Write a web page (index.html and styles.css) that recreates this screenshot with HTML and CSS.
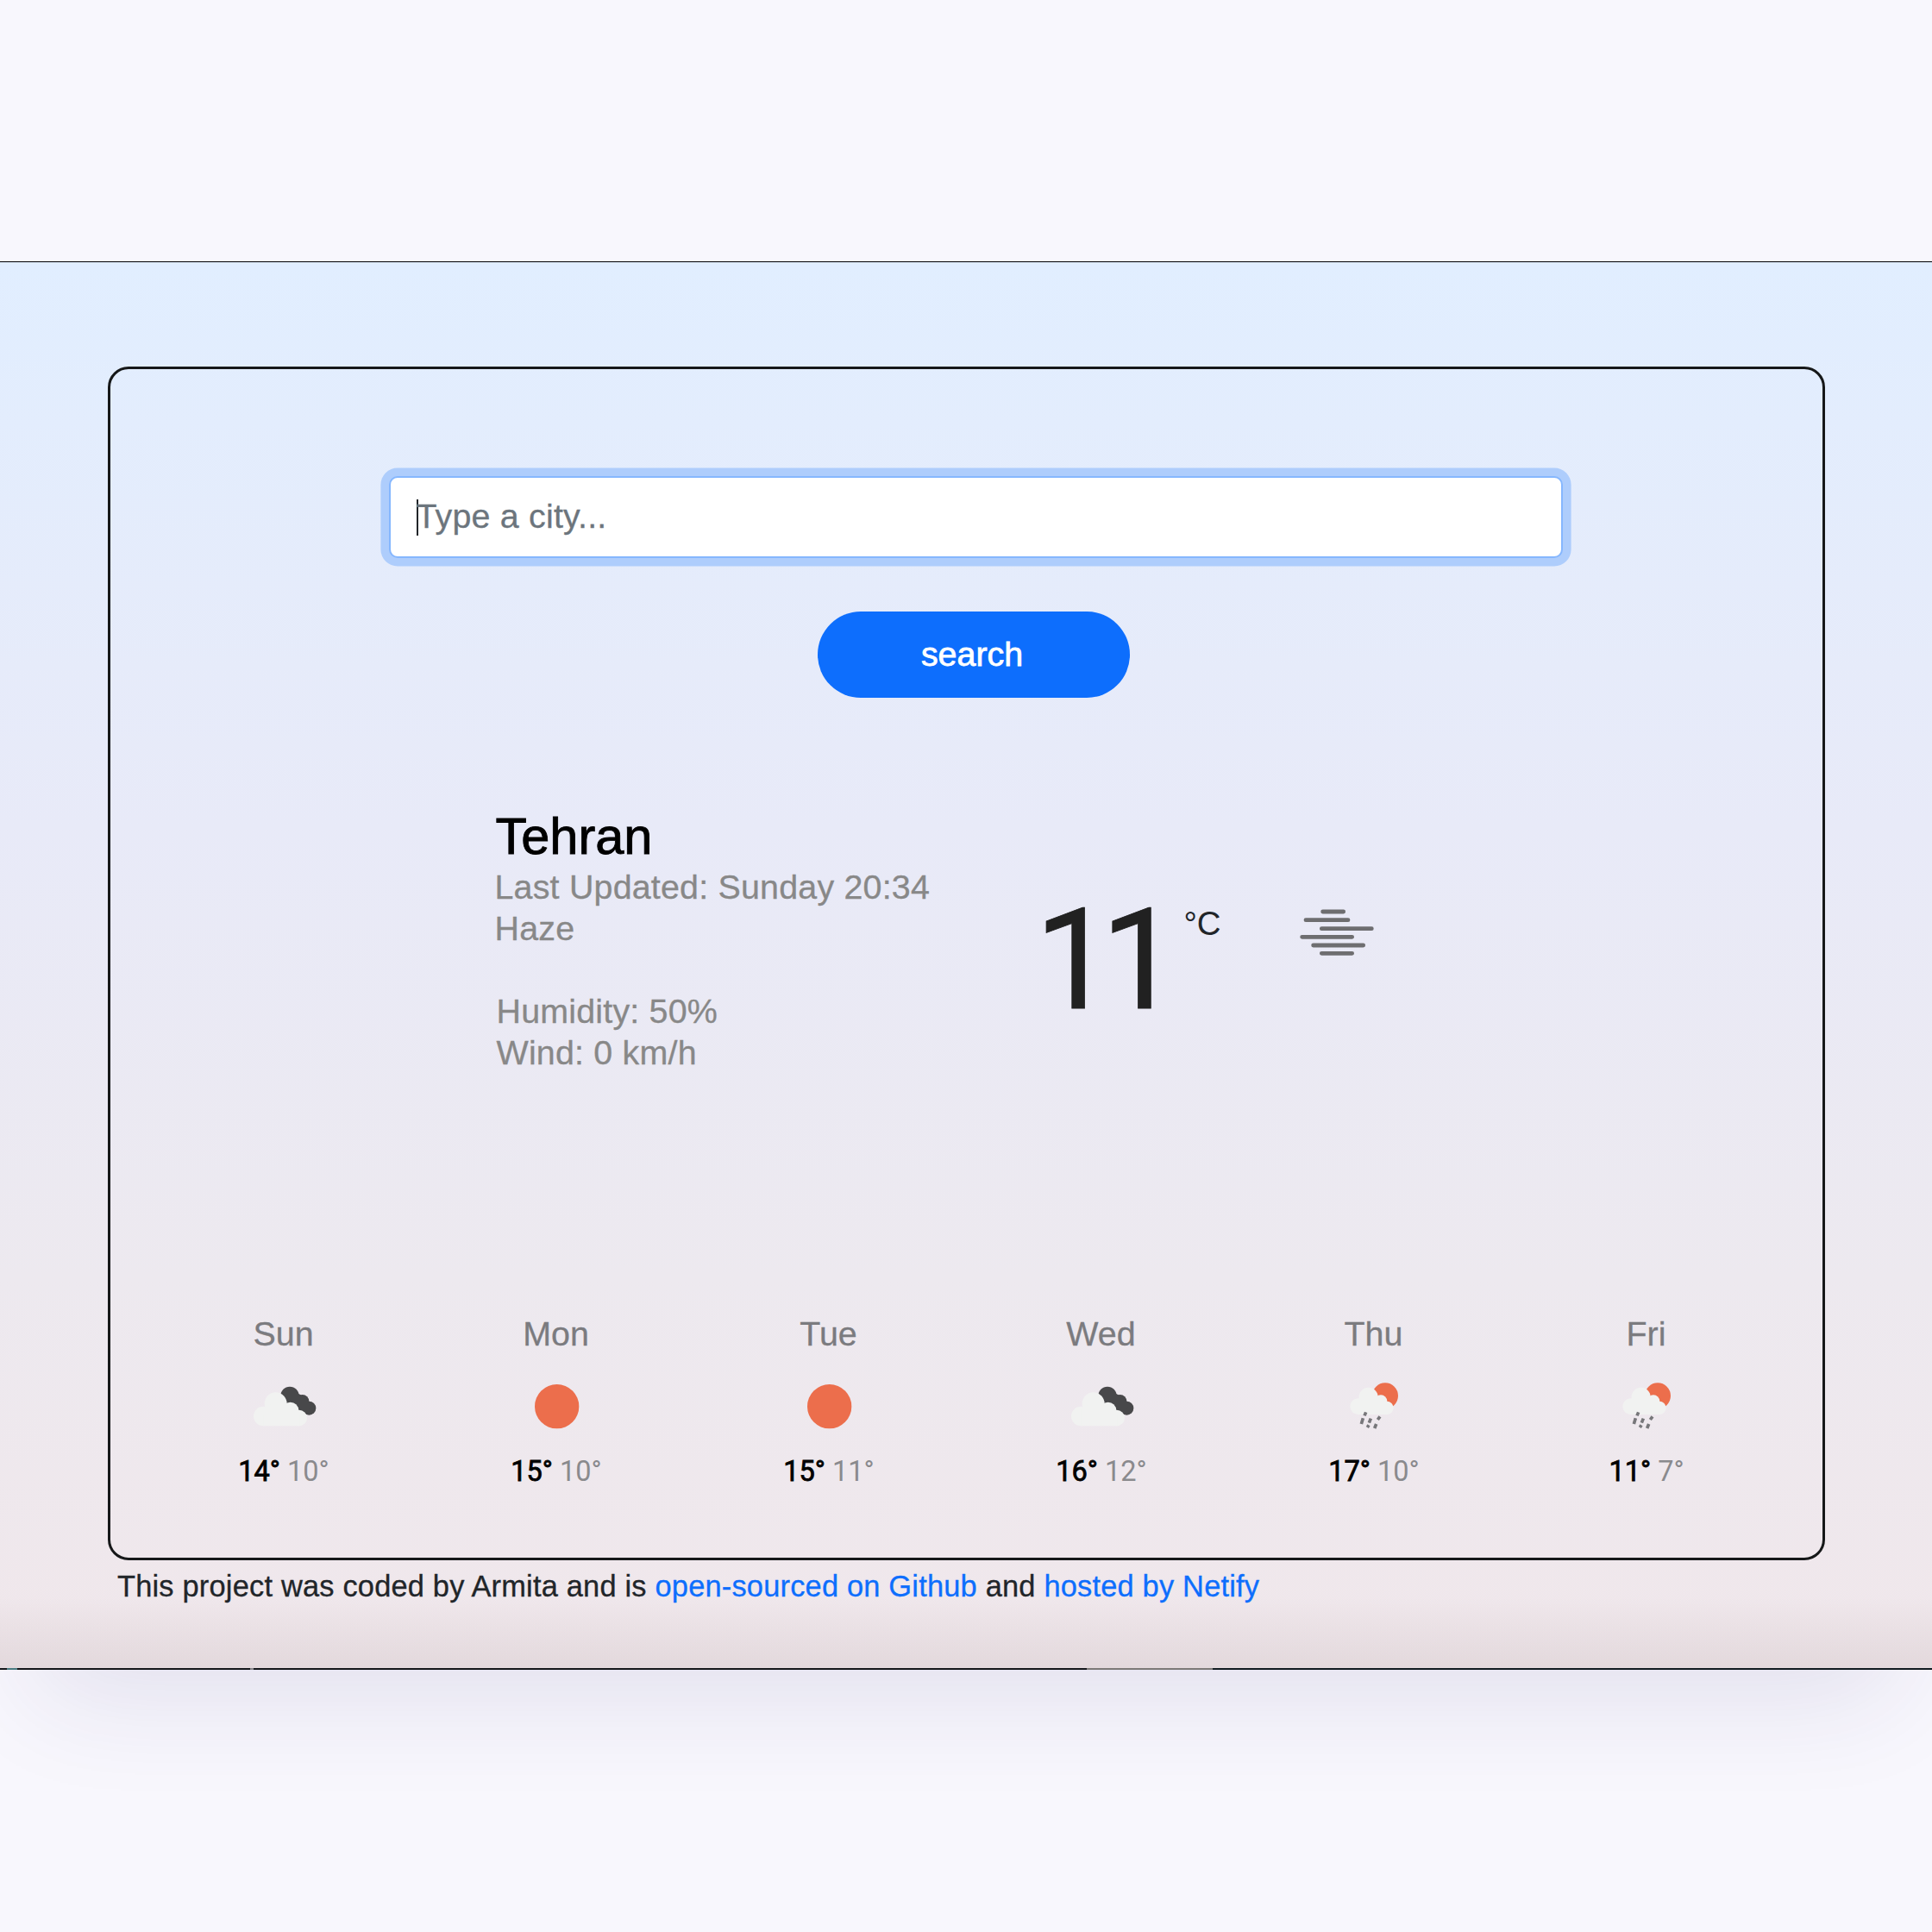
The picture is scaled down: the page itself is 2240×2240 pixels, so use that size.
FILE: index.html
```html
<!DOCTYPE html>
<html lang="en">
<head>
<meta charset="utf-8">
<title>Weather</title>
<link rel="stylesheet" href="styles.css">
</head>
<body>
<svg class="defs" aria-hidden="true">
  <symbol id="clouds" viewBox="145 270 240 240">
    <g fill="#48484a"><circle cx="286" cy="355" r="32"/><circle cx="330" cy="374" r="23"/><circle cx="353" cy="398" r="24"/><path d="M300 340L330 355L365 385L353 398L330 420L270 370Z"/></g>
    <g fill="#f1f2f1"><circle cx="194" cy="426" r="34"/><circle cx="237" cy="382" r="39"/><circle cx="288" cy="406" r="29"/><circle cx="318" cy="432" r="28"/><path d="M194 460H320V420L290 385L237 375L194 400Z"/></g>
  </symbol>
  <symbol id="sun" viewBox="1095 270 240 240"><circle cx="1217" cy="392" r="77" fill="#ec6e4c"/></symbol>
  <symbol id="rain" viewBox="1119 270 240 240">
    <circle cx="1278" cy="355" r="45" fill="#ec6e4c"/>
    <g fill="#f1f2f1"><circle cx="1184" cy="392" r="28"/><circle cx="1220" cy="359" r="33"/><circle cx="1263" cy="374" r="22"/><circle cx="1284" cy="397" r="23"/><path d="M1184 420H1286V385L1262 360L1220 350L1184 380Z"/></g>
    <g stroke="#77777a" stroke-width="11"><path d="M1211 412L1206 424M1201 433L1195 453M1228 434L1222 449M1221 457L1216 465M1260 427L1252 438M1247 453L1241 468"/></g>
  </symbol>
</svg>
<main class="screen">
  <section class="card">
    <form class="search">
      <div class="field"><span class="caret"></span><span class="placeholder">Type a city...</span></div>
      <button class="submit" type="button">search</button>
    </form>
    <div class="current">
      <div class="details">
        <h1 class="city">Tehran</h1>
        <div>Last Updated: Sunday 20:34</div>
        <div>Haze</div>
        <div class="extra">
          <div>Humidity: 50%</div>
          <div>Wind: 0 km/h</div>
        </div>
      </div>
      <div class="temperature">11</div>
      <div class="unit">°C</div>
      <svg class="haze" viewBox="975 90 280 190" stroke="#6e6e70" stroke-width="14.5" stroke-linecap="round"><path d="M1064 111H1136M1005 140H1152M1060 170H1234M992 199H1166M1031 228H1205M1060 256H1166"/></svg>
    </div>
    <div class="forecast">
      <div class="day"><div class="name">Sun</div><svg class="icon"><use href="#clouds"/></svg><div class="range"><span class="max">14°</span> <span>10°</span></div></div>
      <div class="day"><div class="name">Mon</div><svg class="icon"><use href="#sun"/></svg><div class="range"><span class="max">15°</span> <span>10°</span></div></div>
      <div class="day"><div class="name">Tue</div><svg class="icon"><use href="#sun"/></svg><div class="range"><span class="max">15°</span> <span>11°</span></div></div>
      <div class="day"><div class="name">Wed</div><svg class="icon"><use href="#clouds"/></svg><div class="range"><span class="max">16°</span> <span>12°</span></div></div>
      <div class="day"><div class="name">Thu</div><svg class="icon"><use href="#rain"/></svg><div class="range"><span class="max">17°</span> <span>10°</span></div></div>
      <div class="day"><div class="name">Fri</div><svg class="icon"><use href="#rain"/></svg><div class="range"><span class="max">11°</span> <span>7°</span></div></div>
    </div>
  </section>
  <footer class="credit">This project was coded by Armita and is <a href="#">open-sourced on Github</a> and <a href="#">hosted by Netify</a></footer>
  <div class="dock-edge"></div>
</main>
</body>
</html>
```
FILE: styles.css
```css
* { box-sizing: border-box; }
body {
  margin: 0;
  height: 2240px;
  padding-top: 303px;
  overflow: hidden;
  background: #f8f7fd;
  color: #212529;
  font: 39.4px/47.5px "Liberation Sans", Arial, sans-serif;
}
.defs { display: none; }
.screen {
  display: flex;
  flex-direction: column;
  height: 1633px;
  padding: 121px 124.5px 0 125px;
  border-top: 1px solid #000;
  background:
    linear-gradient(to top, rgba(70, 40, 40, .08), rgba(70, 40, 40, 0) 84px),
    linear-gradient(#e1eeff, #e8eaf8 40%, #ede9ef 72%, #f0e7eb);
  box-shadow: 0 75px 120px -45px rgba(50, 40, 110, .11);
}
.card {
  height: 1384px;
  flex: none;
  border: 3px solid #161819;
  border-radius: 24px;
  padding-top: 124px;
}
.search { display: flex; flex-direction: column; }
.field {
  display: flex;
  align-items: center;
  width: 1361px;
  height: 95px;
  margin-left: 323px;
  padding-left: 29.5px;
  border: 2.4px solid #86b7fe;
  border-radius: 10px;
  background: #fff;
  box-shadow: 0 0 0 9.6px #aecdfc;
  color: #6c757d;
  letter-spacing: .2px;
}
.caret { width: 2px; height: 42px; margin-right: -2px; background: #212529; }
.placeholder { padding-bottom: 2px; -webkit-text-stroke: .3px; }
.submit {
  width: 362px;
  height: 100px;
  margin: 62px 0 0 820px;
  padding: 0 4px 0 0;
  border: 0;
  border-radius: 50px;
  background: #0d6efd;
  color: #fff;
  font: inherit;
  -webkit-text-stroke: .8px;
}
.current {
  display: flex;
  height: 589px;
  margin-top: 125px;
  padding-left: 445.5px;
}
.details { width: 626px; color: #888; letter-spacing: .2px; -webkit-text-stroke: .3px; }
.city { margin: 0; padding-left: 1px; font-size: 59.5px; line-height: 71px; font-weight: 400; letter-spacing: 0; color: #000; -webkit-text-stroke: .9px; }
.extra { margin: 49px 0 0 2px; }
.temperature {
  width: 173px;
  margin-top: 100.3px;
  font-family: Roboto, "Liberation Sans", sans-serif;
  font-size: 163px;
  line-height: 160px;
  letter-spacing: -14.8px;
  color: #212121;
  -webkit-text-stroke: .8px;
}
.unit { width: 131px; margin-top: 113px; font-size: 38.4px; }
.haze { width: 93.3px; height: 63.3px; margin-top: 116px; }
.forecast {
  display: grid;
  grid-template-columns: repeat(6, 316px);
  margin-left: 42.5px;
  color: #7b7b7f;
}
.day { display: flex; flex-direction: column; align-items: center; }
.name { -webkit-text-stroke: .3px; }
.icon { width: 80px; height: 80px; margin: 19px 0 16px; }
.range {
  padding-left: 1px;
  font-family: Roboto, "Liberation Sans", sans-serif;
  font-size: 32.5px;
  line-height: 40px;
  color: #8a8a8d;
}
.max { color: #000; -webkit-text-stroke: .8px; }
.credit {
  margin: 5px 0 0 11px;
  font-size: 34.4px;
  line-height: 50px;
  letter-spacing: .2px;
  white-space: nowrap;
  -webkit-text-stroke: .3px;
}
.credit a { color: #0d6efd; text-decoration: none; }
.dock-edge {
  height: 2px;
  flex: none;
  margin: auto -124.5px 0 -125px;
  background: linear-gradient(to right,
    #14161a 0 8px, #4a7a80 8px 20px, #14161a 20px 290px, #88868a 290px 294px,
    #14161a 294px 1260px, #7c7977 1260px 1406px, #101a20 1406px);
}
```
